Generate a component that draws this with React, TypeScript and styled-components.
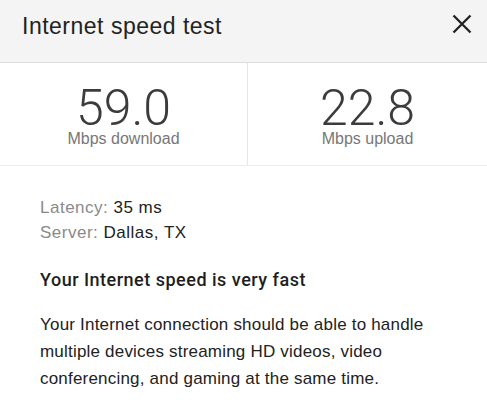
import React from "react";
import styled, { createGlobalStyle } from "styled-components";

const GlobalStyle = createGlobalStyle`
  html, body { margin: 0; padding: 0; background: #ffffff; }
  body { font-family: "Liberation Sans", Arial, sans-serif; color: #222; }
  * { box-sizing: border-box; }
`;

const Page = styled.div`
  width: 487px;
  height: 400px;
  overflow: hidden;
  background: #fff;
`;

const Header = styled.header`
  height: 63px;
  background: #f4f4f4;
  border-bottom: 1px solid #dcdcdc;
  display: flex;
  align-items: flex-start;
  justify-content: space-between;
  padding: 13px 14px 0 22px;
`;

const Title = styled.h1`
  margin: 0;
  font-size: 23px;
  line-height: 26px;
  letter-spacing: 0.5px;
  font-weight: 400;
  color: #222;
`;

const CloseButton = styled.button`
  border: 0;
  background: transparent;
  padding: 0;
  margin-top: 0;
  width: 22px;
  height: 22px;
  display: flex;
  align-items: center;
  justify-content: center;
  color: #222;
`;

const Stats = styled.section`
  display: grid;
  grid-template-columns: 248px 1fr;
  border-bottom: 1px solid #ececec;
`;

const StatCell = styled.div<{ $divider?: boolean }>`
  display: flex;
  flex-direction: column;
  align-items: center;
  padding: 24px 0 17px;
  border-right: ${(p) => (p.$divider ? "1px solid #e6e6e6" : "none")};
`;

const StatValue = styled.div`
  font-family: Roboto, "Liberation Sans", sans-serif;
  font-weight: 300;
  font-size: 50px;
  line-height: 42px;
  color: #3c3c3c;
`;

const StatLabel = styled.div`
  margin-top: 1px;
  font-size: 16px;
  line-height: 18px;
  color: #777;
`;

const Body = styled.section`
  padding: 29px 30px 0 40px;
`;

const InfoLine = styled.div`
  font-size: 17px;
  line-height: 25px;
  letter-spacing: 0.5px;
  color: #222;
`;

const InfoKey = styled.span`
  color: #8a8a8a;
`;

const Verdict = styled.h2`
  margin: 22px 0 0;
  font-family: Roboto, "Liberation Sans", sans-serif;
  font-size: 18px;
  line-height: 25px;
  letter-spacing: 0.5px;
  font-weight: 500;
  color: #1e1e1e;
`;

const Description = styled.p`
  margin: 19px 0 0;
  font-size: 17px;
  line-height: 27px;
  letter-spacing: 0.2px;
  color: #222;
`;

const CloseIcon = () => (
  <svg width="20" height="20" viewBox="0 0 20 20" fill="none">
    <path d="M1.5 1.5 L18.5 18.5 M18.5 1.5 L1.5 18.5" stroke="currentColor" strokeWidth="2.3" strokeLinecap="butt" />
  </svg>
);

export default function App() {
  return (
    <Page>
      <GlobalStyle />
      <Header>
        <Title>Internet speed test</Title>
        <CloseButton aria-label="Close">
          <CloseIcon />
        </CloseButton>
      </Header>
      <Stats>
        <StatCell $divider>
          <StatValue>59.0</StatValue>
          <StatLabel>Mbps download</StatLabel>
        </StatCell>
        <StatCell>
          <StatValue>22.8</StatValue>
          <StatLabel>Mbps upload</StatLabel>
        </StatCell>
      </Stats>
      <Body>
        <InfoLine>
          <InfoKey>Latency:</InfoKey> 35 ms
        </InfoLine>
        <InfoLine>
          <InfoKey>Server:</InfoKey> Dallas, TX
        </InfoLine>
        <Verdict>Your Internet speed is very fast</Verdict>
        <Description>
          Your Internet connection should be able to handle multiple devices
          streaming HD videos, video conferencing, and gaming at the same time.
        </Description>
      </Body>
    </Page>
  );
}
